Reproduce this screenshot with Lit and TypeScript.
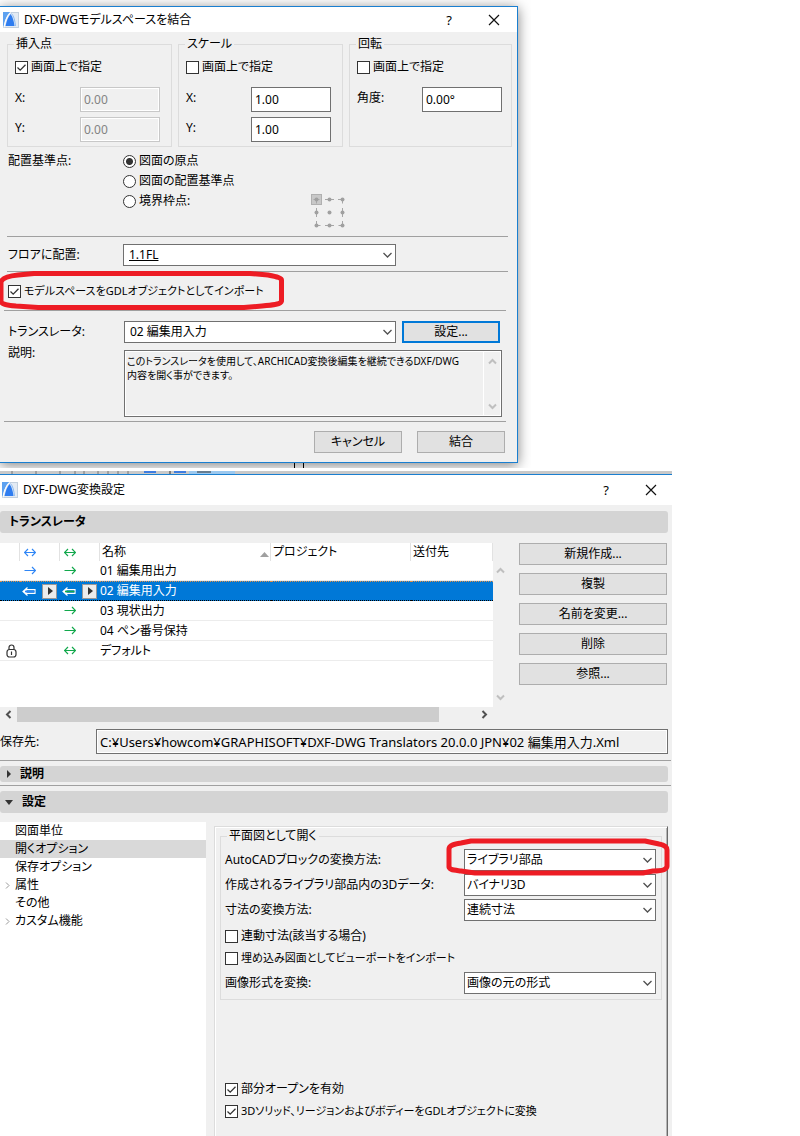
import { LitElement, html, css, svg, nothing } from "lit";
import { customElement } from "lit/decorators.js";
import { classMap } from "lit/directives/class-map.js";

type Mark = "both" | "right" | "in" | "";

interface Translator {
  name: string;
  blue: Mark;
  green: Mark;
  locked?: boolean;
  selected?: boolean;
}

const translators: Translator[] = [
  { name: "01 編集用出力", blue: "right", green: "right" },
  { name: "02 編集用入力", blue: "in", green: "in", selected: true },
  { name: "03 現状出力", blue: "", green: "right" },
  { name: "04 ペン番号保持", blue: "", green: "right" },
  { name: "デフォルト", blue: "", green: "both", locked: true },
];

const tree = [
  { label: "図面単位" },
  { label: "開くオプション", selected: true },
  { label: "保存オプション" },
  { label: "属性", expandable: true },
  { label: "その他" },
  { label: "カスタム機能", expandable: true },
];

const actions = ["新規作成...", "複製", "名前を変更...", "削除", "参照..."];

const notes = "このトランスレータを使用して、ARCHICAD変換後編集を継続できるDXF/DWG\n内容を開く事ができます。";

const logo = html`<svg class="logo" width="16" height="16" viewBox="0 0 16 16" aria-hidden="true">
  <rect x="0.5" y="0.5" width="15" height="15" fill="#e4ebf3" stroke="#c3d0de" />
  <path d="M0 0h7C4 3 2 7 1 13L0 15z" fill="#5ea2f0" />
  <path d="M1 15.500C2 9 4 4 7.500 0.500" fill="none" stroke="#fff" />
  <path d="M2.500 14C3.500 9 5 5 7.500 2C10 5 11 10 11.500 14z" fill="#2f7df0" />
  <path d="M8.500 1.500C11 4 12 9 12.500 14" fill="none" stroke="#8dbdf6" />
</svg>`;

const closeIcon = html`<svg width="12" height="12" viewBox="0 0 12 12" aria-hidden="true">
  <path d="M1 1L11 11M11 1L1 11" stroke="#111" stroke-width="1.200" />
</svg>`;

const chevron = (dir: "up" | "down" | "left" | "right") => {
  const turn = { up: 0, right: 90, down: 180, left: 270 }[dir];
  return html`<svg class="chev" width="9" height="9" viewBox="0 0 9 9" aria-hidden="true">
    <path transform="rotate(${turn} 4.5 4.5)" d="M1 6.500L4.500 3L8 6.500" fill="none" stroke="currentColor" stroke-width="2" />
  </svg>`;
};

const arrow = (kind: Mark, colour: string) => {
  if (!kind) return nothing;
  if (kind === "in") {
    return html`<svg class="arrow" width="14" height="11" viewBox="0 0 14 11" aria-hidden="true">
      <path d="M5.500 1.500L1 5.500L5.500 9.500M2.500 5.500L4.500 3.700H13V7.300H4.500z" fill="none" stroke="#fff" stroke-width="1.200" />
      <path d="M3 5.500H12.500" stroke=${colour} stroke-width="1.600" />
    </svg>`;
  }
  return html`<svg class="arrow thin" width="12" height="9" viewBox="0 0 12 9" aria-hidden="true">
    <path d="M0.500 4.500H11.500M8 1L11.500 4.500L8 8" fill="none" stroke=${colour} stroke-width="1.200" />
    ${kind === "both" ? svg`<path d="M4 1L0.500 4.500L4 8" fill="none" stroke=${colour} stroke-width="1.200" />` : nothing}
  </svg>`;
};

const lock = html`<svg class="lock" width="11" height="14" viewBox="0 0 11 14" aria-hidden="true">
  <path d="M3 6V3.500a2.500 2.500 0 0 1 5 0V6" fill="none" stroke="#333" stroke-width="1.200" />
  <rect x="1" y="5.500" width="9" height="7.500" rx="2.500" fill="#fff" stroke="#333" stroke-width="1.200" />
  <path d="M5.500 7.500v3.500" stroke="#333" stroke-width="1.200" />
</svg>`;

const anchorGrid = html`<svg class="anchor" width="36" height="36" viewBox="0 0 36 36" role="img" aria-label="境界枠点">
  <rect x="0.500" y="0.500" width="10" height="10" fill="#c8c8c8" stroke="#b0b0b0" />
  <g stroke="#a6a6a6" stroke-width="1">
    <path d="M2.500 5.500h6M5.500 5.500v4M14 5.500h9M27 5.500h4.500v4M5.500 14v9M31.500 14v9M5.500 27v4.500h4M14 31.500h9M31.500 27v4.500h-4" fill="none" />
  </g>
  <g fill="#a0a0a0">
    ${[5.5, 18.5, 31.5].map((y) => [5.5, 18.5, 31.5].map((x) => svg`<circle cx=${x} cy=${y} r="2" />`))}
  </g>
</svg>`;

@customElement("app-root")
export class AppRoot extends LitElement {
  static styles = css`
    :host {
      display: flex;
      flex-direction: column;
      min-height: 100vh;
      background: #fff;
      color: #000;
      font-family: "Noto Sans", "Noto Sans CJK JP", sans-serif;
      font-size: 12px;
      line-height: 16px;
      font-feature-settings: "palt";
    }
    * { box-sizing: border-box; }
    button, input, select, textarea {
      font: inherit;
      font-feature-settings: inherit;
      color: inherit;
      margin: 0;
      border-radius: 0;
    }
    svg { display: block; flex: none; }

    .stage {
      box-sizing: content-box;
      width: calc(66% - 10px);
      padding: 6px 13px 5px 0;
      overflow: hidden;
      position: relative;
    }
    .window { background: #f0f0f0; }
    .merge {
      border: 1px solid #1a7fd0;
      border-left: 0;
      box-shadow: 0 2px 12px rgba(0, 0, 0, 0.5);
      padding-bottom: 9px;
    }
    .ticks { position: absolute; left: 294px; bottom: 0; }

    .title { display: flex; align-items: center; background: #fff; }
    .title h1 { flex: 1; margin: 0 0 0 5px; font-size: 12px; font-weight: 400; }
    .merge .title { height: 25px; padding: 0 2px 0 3px; }
    .convert .title { height: 30px; padding-left: 2px; }
    .caption {
      width: 42px;
      height: 24px;
      padding: 0;
      border: 0;
      background: none;
      display: flex;
      align-items: center;
      justify-content: center;
      font-size: 13px;
    }
    .caption + .caption { margin-left: 3px; }

    .groups {
      display: grid;
      grid-template-columns: 165fr 165fr 163fr;
      gap: 6px;
      padding: 4px 5px 0 7px;
    }
    fieldset { margin: 0; min-width: 0; border: 1px solid #dcdcdc; }
    legend { margin-left: -1px; padding: 0 2px; height: 16px; }
    .groups fieldset { padding: 5px 11px 4px 7px; }
    .groups fieldset:last-child { padding-right: 9px; }
    .check { display: flex; align-items: center; gap: 3px; height: 20px; }
    .check.compact { font-size: 11px; }
    .check input {
      appearance: none;
      flex: none;
      width: 13px;
      height: 13px;
      border: 1px solid #333;
      background: #fff;
    }
    .check input[type="radio"] { border-radius: 50%; }
    .check input[type="checkbox"]:checked {
      background: #fff url("data:image/svg+xml,%3Csvg xmlns='http://www.w3.org/2000/svg' viewBox='0 0 11 11'%3E%3Cpath d='M1.500 5.500L4.200 8.200L9.500 2.800' fill='none' stroke='%23333' stroke-width='1.300'/%3E%3C/svg%3E") center / 11px 11px;
    }
    .check input[type="radio"]:checked {
      background: radial-gradient(circle, #333 3px, #fff 4px);
    }
    .pair { display: flex; justify-content: space-between; height: 25px; }
    .pair label { padding-top: 3px; }
    .check + .pair { margin-top: 10px; }
    .pair + .pair { margin-top: 5px; }
    .pair input {
      width: 80px;
      height: 25px;
      padding: 0 3px;
      border: 1px solid #707070;
      background: #fff;
    }
    .pair input:disabled {
      border-color: #c8c8c8;
      background: #f0f0f0;
      box-shadow: inset 0 0 0 1px #fff;
      color: #838383;
    }

    .base { display: flex; height: 89px; padding: 4px 0 0 8px; }
    .base > .name { width: 115px; padding-top: 2px; }
    .base .radios { width: 188px; }
    .base .anchor { align-self: flex-end; margin-bottom: 6px; }
    .rule { height: 1px; margin: 0 9px 0 7px; background: #a0a0a0; }
    .rule.wide { margin: 0 11px 0 4px; }

    .row { display: flex; align-items: center; padding-left: 8px; }
    .row > .name { width: 115px; flex: none; }
    .combo { position: relative; display: block; height: 22px; }
    .combo select {
      appearance: none;
      display: block;
      width: 100%;
      height: 22px;
      padding: 0 20px 0 5px;
      border: 1px solid #707070;
      background: #fff;
    }
    .combo svg { position: absolute; right: 3px; top: 8px; pointer-events: none; }
    .floor { height: 34px; padding-top: 2px; padding-right: 121px; }
    .floor .combo, .translator .combo { flex: 1; }
    .floor select { text-decoration: underline; }
    .import { position: relative; height: 38px; padding-left: 8px; display: flex; align-items: center; }
    .ring { position: absolute; overflow: visible; pointer-events: none; }
    .import .ring { left: 0; top: -1px; }
    .translator { padding: 10px 17px 0 8px; }
    .row.translator > .name, .describe > .name { width: 116px; flex: none; }
    .push {
      height: 22px;
      padding: 0;
      border: 1px solid #adadad;
      background: #e1e1e1;
      text-align: center;
      line-height: 16px;
    }
    .push.focus { width: 98px; margin-left: 6px; border: 2px solid #0078d7; }
    .describe { display: flex; padding: 2px 15px 4px 8px; }
    .notes {
      flex: 1;
      display: flex;
      height: 67px;
      margin-top: 5px;
      border: 1px solid #707070;
      box-shadow: inset 0 0 0 1px #fff;
    }
    .notes textarea {
      flex: 1;
      min-width: 0;
      padding: 3px 0 0 2px;
      border: 0;
      resize: none;
      overflow: hidden;
      background: none;
      font-size: 10px;
      line-height: 14px;
    }
    .vbar {
      display: flex;
      flex-direction: column;
      justify-content: space-between;
      align-items: center;
      width: 17px;
      padding: 6px 0 5px;
      color: #bfbfbf;
    }
    .notes .vbar { width: 18px; padding-right: 1px; border-left: 1px solid #fff; }
    .footer { display: flex; justify-content: flex-end; gap: 15px; padding: 9px 12px 0 0; }
    .footer .push { width: 88px; }

    .backdrop { width: 84%; height: 3px; margin-top: 3px; background: #c9c9c9; overflow: hidden; }
    .convert {
      width: 84%;
      flex: 1;
      display: flex;
      flex-direction: column;
      border-top: 1px solid #1a7fd0;
    }
    .bar {
      display: flex;
      align-items: center;
      height: 22px;
      margin: 6px 4px 0 0;
      border-radius: 3px;
      background: #d4d4d4;
      font-size: 12px;
      font-weight: 700;
    }
    .bar h2 { margin: 0; padding-left: 9px; font: inherit; }
    .bar button {
      display: flex;
      align-items: center;
      gap: 9px;
      padding: 0 0 0 5px;
      border: 0;
      background: none;
      font-weight: 700;
    }
    .bar.slim { height: 16px; margin: 5px 4px 3px 0; }
    .bar.main { margin-top: 5px; }
    .line { height: 1px; margin-right: 1px; background: #a0a0a0; }

    .list { display: flex; padding: 10px 5px 0 0; }
    .scroller { flex: 1; min-width: 0; }
    .view { display: flex; height: 164px; }
    .sheet { flex: 1; min-width: 0; background: #fff; }
    .view .vbar { width: 15px; padding: 23px 0 5px; }
    table { width: 100%; table-layout: fixed; border-collapse: separate; border-spacing: 0; }
    .c1 { width: 20px; }
    .c2 { width: 40px; }
    .c3 { width: 171px; }
    .c4 { width: 140px; }
    th {
      height: 18px;
      padding: 0 0 0 2px;
      border-right: 1px solid #e2e2e2;
      font-weight: 400;
      text-align: left;
      white-space: nowrap;
    }
    td { height: 20px; padding: 0; border-bottom: 1px solid #ececec; line-height: 16px; white-space: nowrap; }
    tr.selected td { background: #0078d7; color: #fff; border-bottom: 1px dotted #000; border-top: 1px dotted #e0904a; }
    .sorted { display: flex; justify-content: space-between; align-items: center; }
    .mark { display: flex; align-items: center; justify-content: space-between; padding: 0 3px 0 2px; }
    .arrow.thin { margin-left: 2px; }
    th .arrow.thin { margin-left: 2px; }
    .play {
      width: 15px;
      height: 15px;
      padding: 0 0 0 1px;
      border: 1px solid #999;
      background: #ececec;
      display: flex;
      align-items: center;
      justify-content: center;
    }
    .lock { margin-left: 6px; }
    .hbar { display: flex; align-items: center; height: 15px; color: #505050; }
    .hbar .thumb { flex: 1; height: 15px; margin-right: 41px; background: #cdcdcd; }
    .hbar .start { width: 17px; padding-left: 4px; }
    .hbar .end { width: 28px; }
    .actions { width: 148px; margin-left: 11px; display: grid; gap: 8px; align-content: start; }
    .save { display: flex; align-items: center; padding: 7px 4px 6px 0; }
    .save label { width: 96px; flex: none; }
    .save input {
      flex: 1;
      min-width: 0;
      height: 25px;
      padding: 0 3px;
      border: 1px solid #707070;
      background: #f0f0f0;
      box-shadow: inset 0 0 0 1px #fff;
      font-size: 13px;
    }

    .settings { flex: 1; display: flex; padding: 9px 4px 0 0; }
    .tree { width: 206px; margin: 0; padding: 0; background: #fff; list-style: none; }
    .tree li { display: flex; align-items: center; height: 18px; padding-left: 4px; color: #888; }
    .tree li.selected { background: #d9d9d9; }
    .tree a { color: #000; text-decoration: none; }
    .tree .twist { width: 11px; }
    .panel {
      flex: 1;
      margin: 4px 0 0 8px;
      border: 1px solid #dcdcdc;
      border-right: 1px solid #696969;
      border-bottom: 0;
      box-shadow: inset 1px 1px 0 #fff, inset -1px 0 0 #b5b5b5;
      padding: 1px 5px 0;
    }
    .panel fieldset { position: relative; padding: 0 5px 5px 4px; }
    .panel legend { margin-left: 2px; }
    .option { display: flex; align-items: center; justify-content: space-between; height: 22px; }
    .option + .option { margin-top: 3px; }
    .option .combo { width: 192px; }
    .option select { padding-left: 2px; }
    .panel .check { height: 22px; }
    .option + .check { margin-top: 4px; }
    .check + .option { margin-top: 3px; }
    .panel .lower { margin-top: 78px; padding-left: 5px; }
    .panel .ring { right: -8px; top: -5px; }
    .panel legend + .option { margin-top: 5px; }
  `;

  private title(text: string) {
    return html`<header class="title">
      ${logo}
      <h1>${text}</h1>
      <button class="caption" type="button" aria-label="ヘルプ">?</button>
      <button class="caption" type="button" aria-label="閉じる">${closeIcon}</button>
    </header>`;
  }

  private check(label: string, checked = false, compact = false) {
    return html`<label class=${classMap({ check: true, compact })}>
      <input type="checkbox" .checked=${checked} />${label}
    </label>`;
  }

  private combo(id: string, value: string) {
    return html`<span class="combo">
      <select id=${id}><option>${value}</option></select>
      <svg width="11" height="7" viewBox="0 0 11 7" aria-hidden="true">
        <path d="M1.500 1L5.500 5L9.500 1" fill="none" stroke="#505050" stroke-width="1.300" />
      </svg>
    </span>`;
  }

  private pair(id: string, label: string, value: string, disabled = false) {
    return html`<div class="pair">
      <label for=${id}>${label}</label>
      <input id=${id} type="text" .value=${value} ?disabled=${disabled} />
    </div>`;
  }

  private option(id: string, label: string, value: string) {
    return html`<div class="option"><label for=${id}>${label}</label>${this.combo(id, value)}</div>`;
  }

  private mergeDialog() {
    return html`<div class="stage">
      <svg class="ticks" width="10" height="5" aria-hidden="true">
        <path d="M0.500 0V5M9.500 0V5" stroke="#000" />
      </svg>
      <section class="window merge">
        ${this.title("DXF-DWGモデルスペースを結合")}
        <div class="groups">
          <fieldset>
            <legend>挿入点</legend>
            ${this.check("画面上で指定", true)} ${this.pair("ix", "X:", "0.00", true)}
            ${this.pair("iy", "Y:", "0.00", true)}
          </fieldset>
          <fieldset>
            <legend>スケール</legend>
            ${this.check("画面上で指定")} ${this.pair("sx", "X:", "1.00")} ${this.pair("sy", "Y:", "1.00")}
          </fieldset>
          <fieldset>
            <legend>回転</legend>
            ${this.check("画面上で指定")} ${this.pair("angle", "角度:", "0.00°")}
          </fieldset>
        </div>
        <div class="base" role="radiogroup" aria-labelledby="base-name">
          <span class="name" id="base-name">配置基準点:</span>
          <div class="radios">
            ${["図面の原点", "図面の配置基準点", "境界枠点:"].map(
              (text, i) => html`<label class="check"><input type="radio" name="base" .checked=${i === 0} />${text}</label>`
            )}
          </div>
          ${anchorGrid}
        </div>
        <div class="rule"></div>
        <div class="row floor">
          <label class="name" for="floor">フロアに配置:</label>
          ${this.combo("floor", "1.1FL")}
        </div>
        <div class="rule"></div>
        <div class="import">
          ${this.check("モデルスペースをGDLオブジェクトとしてインポート", true, true)}
          <svg class="ring" width="284" height="40" viewBox="0 0 284 40" aria-hidden="true">
            <path d="M1 31V11C2 7 8 5 18 4L34 2.500H250L268 4C278 6 281.500 7 281.500 9V30C281 33 274 34 262 35L244 36.500H38L16 35C6 34 1 33 1 30z"
              fill="none" stroke="#ed1c24" stroke-width="5" stroke-linejoin="round" />
          </svg>
        </div>
        <div class="rule wide"></div>
        <div class="row translator">
          <label class="name" for="translator">トランスレータ:</label>
          ${this.combo("translator", "02 編集用入力")}
          <button class="push focus" type="button">設定...</button>
        </div>
        <div class="describe">
          <label class="name" for="notes">説明:</label>
          <div class="notes">
            <textarea id="notes" readonly .value=${notes}></textarea>
            <div class="vbar">${chevron("up")}${chevron("down")}</div>
          </div>
        </div>
        <div class="rule wide"></div>
        <div class="footer">
          <button class="push" type="button">キャンセル</button>
          <button class="push" type="button">結合</button>
        </div>
      </section>
    </div>`;
  }

  private markCell(kind: Mark, colour: string) {
    return html`<td><div class="mark">
      ${arrow(kind, colour)}
      ${kind === "in"
        ? html`<button class="play" type="button" aria-label="選択">
            <svg width="5" height="8" viewBox="0 0 5 8" aria-hidden="true"><path d="M0 0L5 4L0 8z" fill="#333" /></svg>
          </button>`
        : nothing}
    </div></td>`;
  }

  private translatorList() {
    const blue = "#2f86f6";
    const green = "#12a84c";
    return html`<table>
      <colgroup>
        <col class="c1" /><col class="c2" /><col class="c2" /><col class="c3" /><col class="c4" /><col />
      </colgroup>
      <thead>
        <tr>
          <th></th>
          <th>${arrow("both", blue)}</th>
          <th>${arrow("both", green)}</th>
          <th>
            <div class="sorted">
              名称
              <svg width="11" height="12" viewBox="0 0 11 12" aria-hidden="true"><path d="M1 11L5.500 6L10 11z" fill="#a0a0a0" /></svg>
            </div>
          </th>
          <th>プロジェクト</th>
          <th>送付先</th>
        </tr>
      </thead>
      <tbody>
        ${translators.map(
          (t) => html`<tr class=${classMap({ selected: !!t.selected })}>
            <td>${t.locked ? lock : nothing}</td>
            ${this.markCell(t.blue, blue)} ${this.markCell(t.green, green)}
            <td>${t.name}</td>
            <td></td>
            <td></td>
          </tr>`
        )}
      </tbody>
    </table>`;
  }

  private convertDialog() {
    return html`<svg class="backdrop" height="3" aria-hidden="true">
        <path d="M12 0v3M36 0v3M60 0v3M75 0v3M84 0v3M98 0v3M108 0v3M118 0v3M128 0v3" stroke="#777" />
        <path d="M144 1h12M174 1h12" stroke="#3f7de0" stroke-width="2" />
        <path d="M189 1.500h46" stroke="#9cc8ee" stroke-width="3" />
        <path d="M170 0v3M197 1h14" stroke="#333" />
      </svg>
      <section class="window convert">
        ${this.title("DXF-DWG変換設定")}
        <div class="bar"><h2>トランスレータ</h2></div>
        <div class="list">
          <div class="scroller">
            <div class="view">
              <div class="sheet">${this.translatorList()}</div>
              <div class="vbar">${chevron("up")}${chevron("down")}</div>
            </div>
            <div class="hbar">
              <span class="start">${chevron("left")}</span>
              <span class="thumb"></span>
              <span class="end">${chevron("right")}</span>
            </div>
          </div>
          <div class="actions">${actions.map((a) => html`<button class="push" type="button">${a}</button>`)}</div>
        </div>
        <div class="save">
          <label for="path">保存先:</label>
          <input id="path" type="text" readonly
            .value=${"C:¥Users¥howcom¥GRAPHISOFT¥DXF-DWG Translators 20.0.0 JPN¥02 編集用入力.Xml"} />
        </div>
        <div class="line"></div>
        <div class="bar slim">
          <button type="button" aria-expanded="false">
            <svg width="6" height="8" viewBox="0 0 6 8" aria-hidden="true"><path d="M2 0L6 4L2 8z" fill="#333" /></svg>説明
          </button>
        </div>
        <div class="line"></div>
        <div class="bar main">
          <button type="button" aria-expanded="true">
            <svg width="8" height="5" viewBox="0 0 8 5" aria-hidden="true"><path d="M0 0H8L4 5z" fill="#333" /></svg>設定
          </button>
        </div>
        <div class="settings">
          <ul class="tree">
            ${tree.map(
              (n) => html`<li class=${classMap({ selected: !!n.selected })}>
                <span class="twist">${n.expandable
                  ? html`<svg width="7" height="7" viewBox="0 0 7 7" aria-hidden="true"><path d="M2 0.500L5 3.500L2 6.500" fill="none" stroke="#999" /></svg>`
                  : nothing}</span>
                <a href="#">${n.label}</a>
              </li>`
            )}
          </ul>
          <div class="panel">
            <fieldset>
              <legend>平面図として開く</legend>
              ${this.option("block", "AutoCADブロックの変換方法:", "ライブラリ部品")}
              ${this.option("data", "作成されるライブラリ部品内の3Dデータ:", "バイナリ3D")}
              ${this.option("dimension", "寸法の変換方法:", "連続寸法")}
              ${this.check("連動寸法(該当する場合)")} ${this.check("埋め込み図面としてビューポートをインポート", false, true)}
              ${this.option("image", "画像形式を変換:", "画像の元の形式")}
              <svg class="ring" width="222" height="36" viewBox="0 0 222 36" aria-hidden="true">
                <path d="M2 28V10C2 6 8 5 14 4L24 2H198L212 5C218 6 220 8 220 11V27C220 31 213 32 206 32L196 34H28L14 32C6 31 2 31 2 27z"
                  fill="none" stroke="#ed1c24" stroke-width="5" stroke-linejoin="round" />
              </svg>
            </fieldset>
            <div class="lower">
              ${this.check("部分オープンを有効", true)}
              ${this.check("3Dソリッド、リージョンおよびボディーをGDLオブジェクトに変換", true, true)}
            </div>
          </div>
        </div>
      </section>`;
  }

  render() {
    return html`${this.mergeDialog()}${this.convertDialog()}`;
  }
}
